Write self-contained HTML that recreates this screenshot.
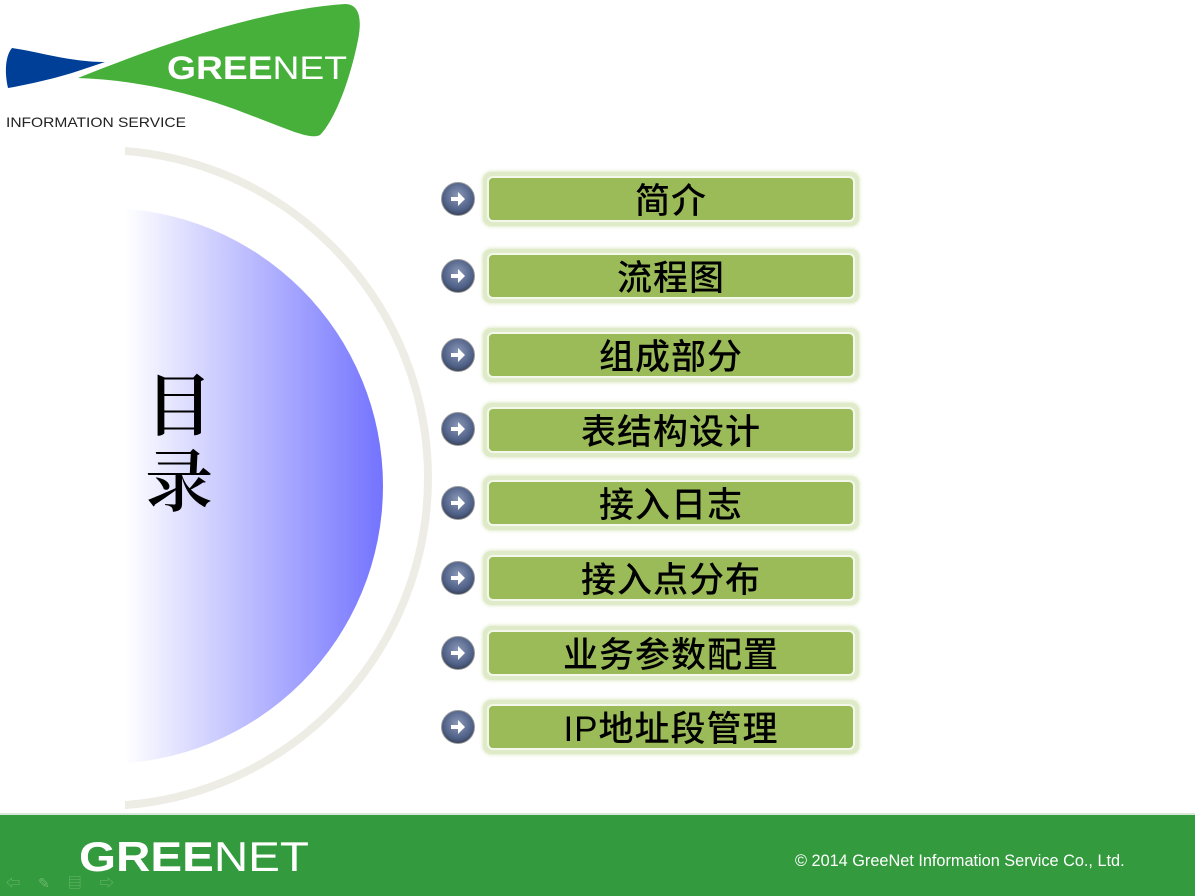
<!DOCTYPE html>
<html><head><meta charset="utf-8"><style>
body{margin:0;width:1195px;height:894px;position:relative;overflow:hidden;background:#fff;font-family:"Liberation Sans","Noto Sans CJK SC",sans-serif}
.btn{position:absolute;left:483px;width:376px;height:54px;border-radius:8px;background:#dfeac8;box-shadow:0 0 4px #cfe0b0}
.btn .in{position:absolute;left:4px;top:4px;right:4px;bottom:4px;border-radius:6px;background:#9bbb59;border:2px solid #f4f8ec;box-sizing:border-box;box-shadow:inset 0 0 0 1px #9bbb59;text-align:center;font-size:35px;font-weight:500;line-height:48px;color:#000;letter-spacing:1px}
.ic{position:absolute;left:441px;width:32px;height:32px;border-radius:50%;background:radial-gradient(circle at 50% 40%,#8a99b8,#4e5f86 60%,#222 100%);border:1px solid #999}
.ic svg{position:absolute;left:6px;top:6px}
</style></head><body>
<svg width="370" height="145" style="position:absolute;left:0;top:0">
<path d="M12 48 C40 52 70 62 105 62 L75 72 C50 80 20 86 8 88 C4 70 6 55 12 48Z" fill="#003f98"/>
<path d="M78 78 C160 45 260 10 345 4 C360 4 362 20 358 40 C350 80 335 120 320 135 C310 140 290 130 250 115 C200 95 140 80 78 78Z" fill="#46b03a"/>
<text x="167" y="79" font-family="Liberation Sans" font-weight="bold" font-size="32" fill="#fff" textLength="180" lengthAdjust="spacingAndGlyphs">GREE<tspan font-weight="normal">NET</tspan></text>
<text x="6" y="127" font-family="Liberation Sans" font-size="14" fill="#222" textLength="180" lengthAdjust="spacingAndGlyphs">INFORMATION SERVICE</text>
</svg>
<svg width="500" height="894" style="position:absolute;left:0;top:0">
<defs><linearGradient id="g" x1="125" x2="383" gradientUnits="userSpaceOnUse"><stop offset="0" stop-color="#fff"/><stop offset="1" stop-color="#7373ff"/></linearGradient>
<clipPath id="c"><rect x="125" y="0" width="400" height="894"/></clipPath></defs>
<circle cx="105" cy="486" r="278" fill="url(#g)" clip-path="url(#c)"/>
<circle cx="100" cy="478" r="328" fill="none" stroke="#eeede5" stroke-width="8" clip-path="url(#c)"/>
</svg>
<div style="position:absolute;left:145px;top:364px;font-size:68px;line-height:76px;font-weight:600;font-family:'Noto Serif CJK SC',serif;color:#000">目<br>录</div>
<div class="ic" style="top:182px"><svg width="20" height="20"><path d="M3 8h7V3l7 7-7 7v-5H3z" fill="#fff"/></svg></div>
<div class="btn" style="top:172px"><div class="in">简介</div></div>
<div class="ic" style="top:259px"><svg width="20" height="20"><path d="M3 8h7V3l7 7-7 7v-5H3z" fill="#fff"/></svg></div>
<div class="btn" style="top:249px"><div class="in">流程图</div></div>
<div class="ic" style="top:338px"><svg width="20" height="20"><path d="M3 8h7V3l7 7-7 7v-5H3z" fill="#fff"/></svg></div>
<div class="btn" style="top:328px"><div class="in">组成部分</div></div>
<div class="ic" style="top:412px"><svg width="20" height="20"><path d="M3 8h7V3l7 7-7 7v-5H3z" fill="#fff"/></svg></div>
<div class="btn" style="top:403px"><div class="in">表结构设计</div></div>
<div class="ic" style="top:486px"><svg width="20" height="20"><path d="M3 8h7V3l7 7-7 7v-5H3z" fill="#fff"/></svg></div>
<div class="btn" style="top:476px"><div class="in">接入日志</div></div>
<div class="ic" style="top:561px"><svg width="20" height="20"><path d="M3 8h7V3l7 7-7 7v-5H3z" fill="#fff"/></svg></div>
<div class="btn" style="top:551px"><div class="in">接入点分布</div></div>
<div class="ic" style="top:636px"><svg width="20" height="20"><path d="M3 8h7V3l7 7-7 7v-5H3z" fill="#fff"/></svg></div>
<div class="btn" style="top:626px"><div class="in">业务参数配置</div></div>
<div class="ic" style="top:710px"><svg width="20" height="20"><path d="M3 8h7V3l7 7-7 7v-5H3z" fill="#fff"/></svg></div>
<div class="btn" style="top:700px"><div class="in">IP地址段管理</div></div>
<div style="position:absolute;left:0;top:813px;width:1195px;height:81px;background:#339a3d;border-top:2px solid #d8e8d8"></div>
<svg width="260" height="50" style="position:absolute;left:78px;top:833px"><text x="1" y="38" font-family="Liberation Sans" font-weight="bold" font-size="42" fill="#fff" textLength="230" lengthAdjust="spacingAndGlyphs">GREE<tspan font-weight="normal">NET</tspan></text></svg>
<div style="position:absolute;left:795px;top:852px;font-size:16.3px;color:#fff">© 2014 GreeNet Information Service Co., Ltd.</div>
<div style="position:absolute;left:6px;top:873px;font-size:14px;color:#6bb870;letter-spacing:18px">⇦✎▤⇨</div>
</body></html>
